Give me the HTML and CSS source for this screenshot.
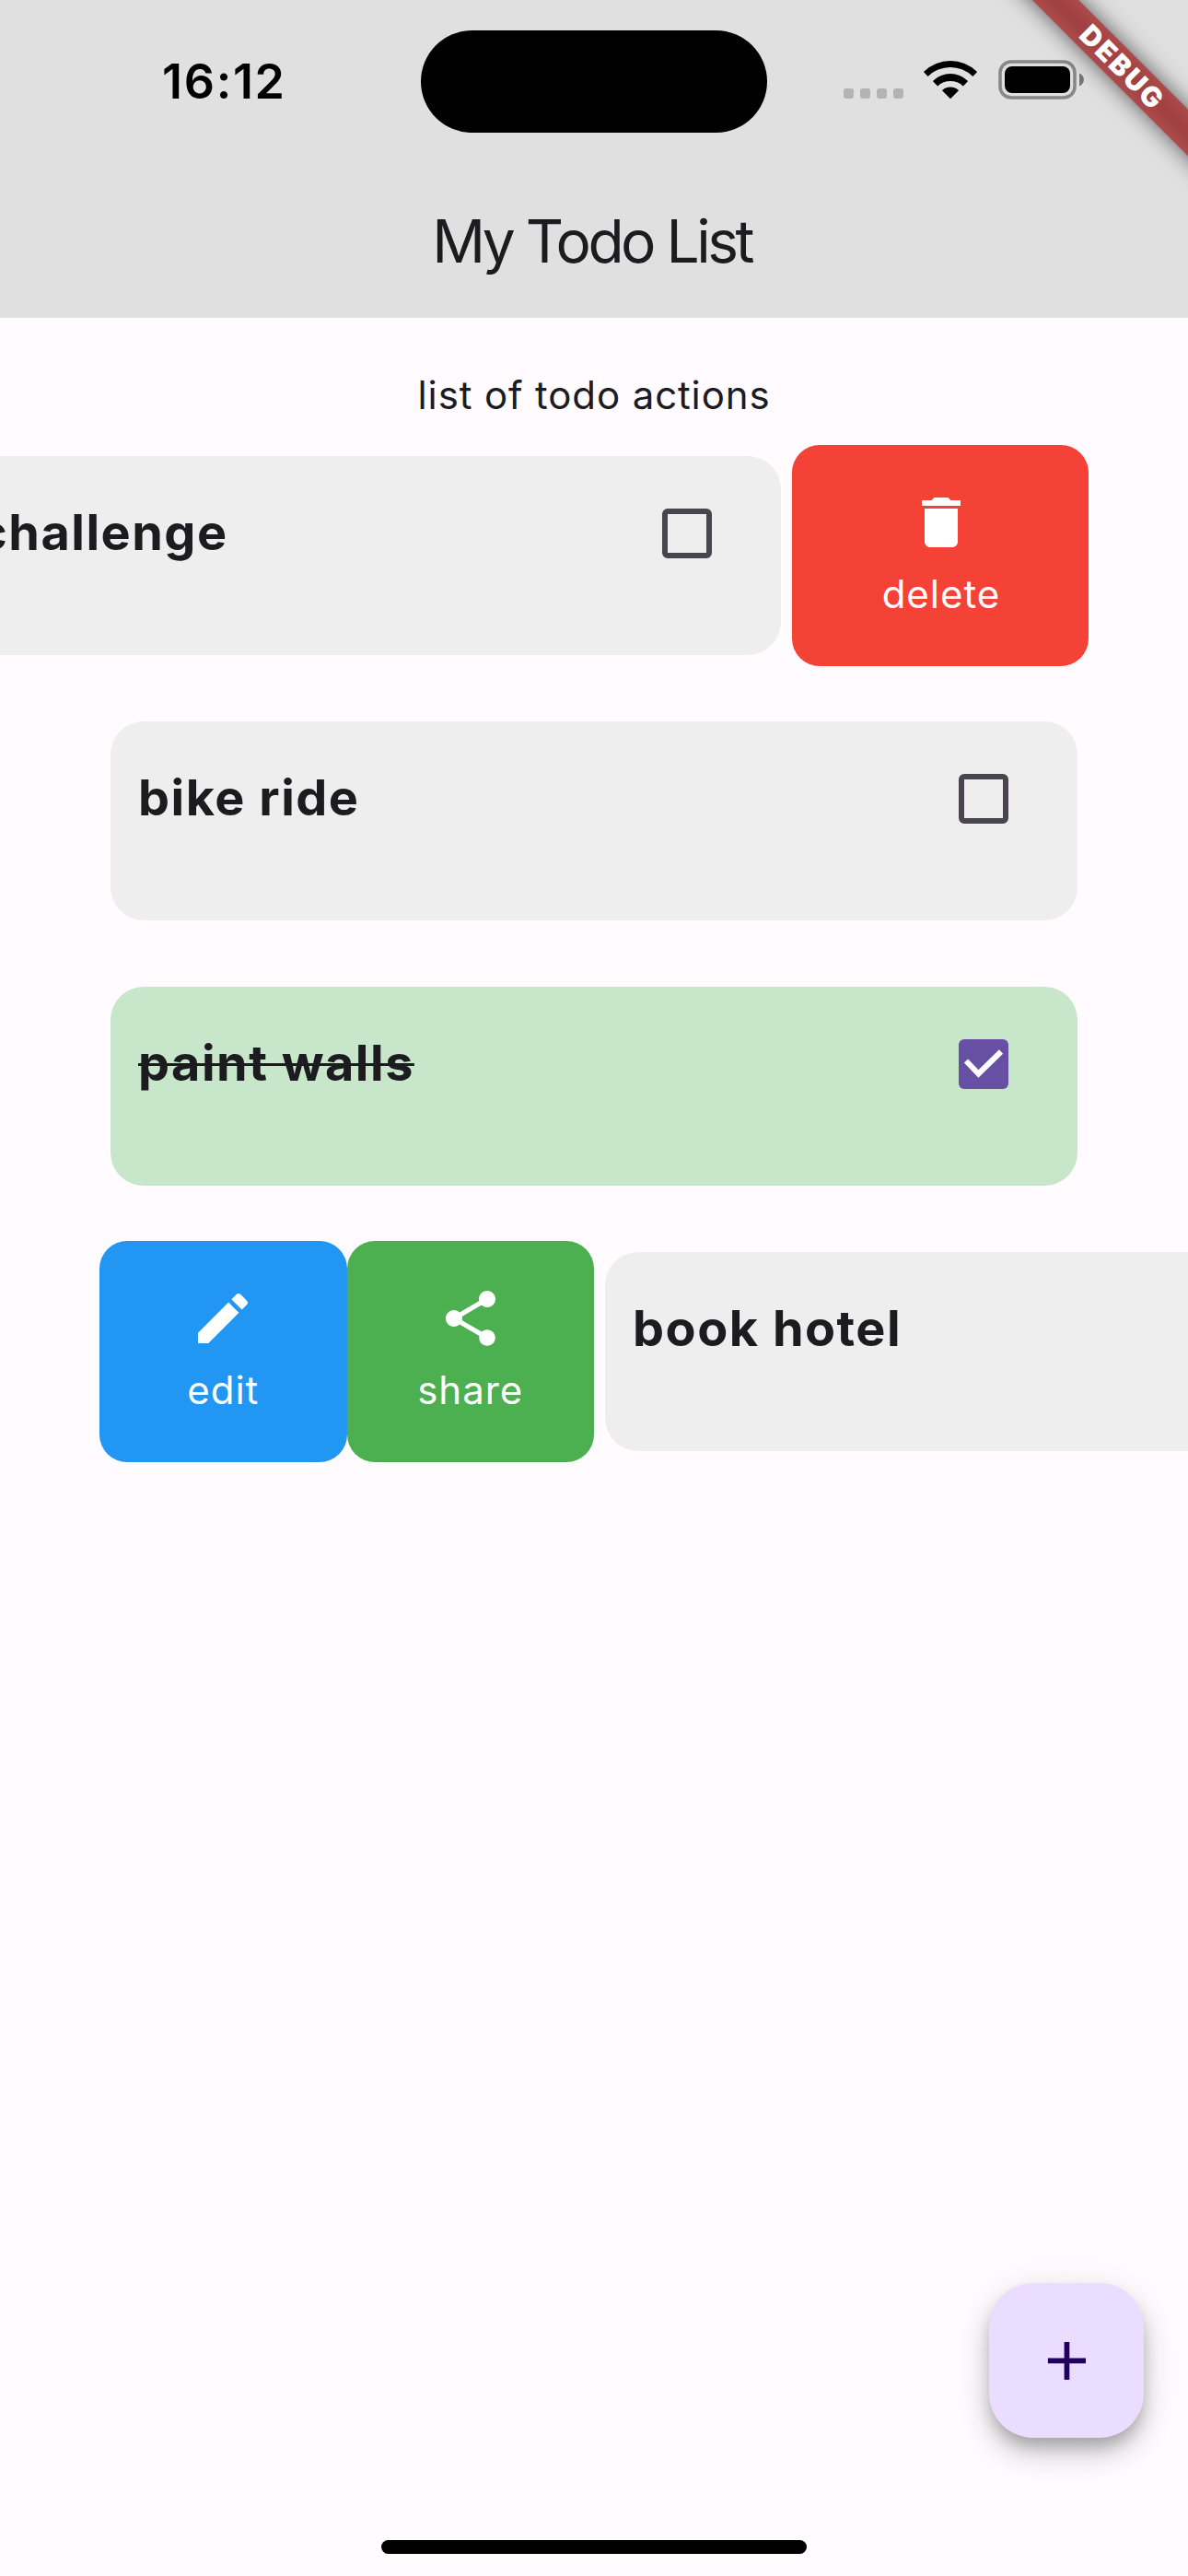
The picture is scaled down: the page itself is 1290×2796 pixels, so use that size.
FILE: index.html
```html
<!DOCTYPE html>
<html lang="en">
<head>
<meta charset="utf-8">
<title>My Todo List</title>
<link rel="stylesheet" href="styles.css">
</head>
<body>
<div class="screen">
  <header class="appbar">
    <div class="status">
      <div class="status-left"><span class="time">16:12</span></div>
      <div class="island"></div>
      <div class="status-right">
        <div class="signal"><i></i><i></i><i></i><i></i></div>
        <svg class="wifi" viewBox="0 0 58 42" width="58" height="42">
          <path d="M0.5 12.5a41 41 0 0 1 57 0 0.8 0.8 0 0 1 0 1.2l-4.2 4.2a34.500 34.500 0 0 0-48.600 0l-4.200-4.200a0.800 0.800 0 0 1 0-1.200z"/>
          <path d="M10.500 22.500a26.600 26.600 0 0 1 37 0 0.800 0.800 0 0 1 0 1.200l-4.700 4.700a20 20 0 0 0-27.600 0l-4.700-4.700a0.800 0.800 0 0 1 0-1.200z"/>
          <path d="M20.500 32.600a13 13 0 0 1 17 0 0.800 0.800 0 0 1 0 1.200l-8 7.900a0.700 0.700 0 0 1-1 0l-8-7.900a0.800 0.800 0 0 1 0-1.200z"/>
        </svg>
        <svg class="battery" viewBox="0 0 93 43" width="93" height="43">
          <rect x="2" y="2" width="81" height="39" rx="12" fill="none" stroke="#888" stroke-width="3.600"/>
          <rect x="7" y="7" width="71" height="29" rx="8"/>
          <path d="M88 14.500c6.500 2.500 6.500 11.500 0 14z" fill="#777"/>
        </svg>
      </div>
    </div>
    <h1 class="title">My Todo List</h1>
  </header>
  <div class="banner">DEBUG</div>

  <main class="content">
    <p class="subtitle">list of todo actions</p>

    <section class="row open-end">
      <article class="card">
        <span class="task">challenge</span>
        <span class="check"></span>
      </article>
      <button class="action delete">
        <svg viewBox="0 0 24 24" width="72" height="72"><path d="M6 19c0 1.100.9 2 2 2h8c1.100 0 2-.9 2-2V7H6v12zM19 4h-3.500l-1-1h-5l-1 1H5v2h14V4z"/></svg>
        <span>delete</span>
      </button>
    </section>

    <section class="row">
      <article class="card">
        <span class="task">bike ride</span>
        <span class="check"></span>
      </article>
    </section>

    <section class="row">
      <article class="card done">
        <span class="task">paint walls</span>
        <span class="check on">
          <svg viewBox="0 0 54 54" width="54" height="54"><path d="M8 23.500 21.500 37.500 46 13.500" fill="none" stroke="#fff" stroke-width="6"/></svg>
        </span>
      </article>
    </section>

    <section class="row open-start">
      <button class="action edit">
        <svg viewBox="0 0 24 24" width="72" height="72"><path d="M3 17.250V21h3.750L17.810 9.940l-3.750-3.750L3 17.250zM20.710 7.040c.39-.39.39-1.020 0-1.410l-2.340-2.340c-.39-.39-1.020-.39-1.410 0l-1.830 1.830 3.750 3.750 1.830-1.830z"/></svg>
        <span>edit</span>
      </button>
      <button class="action share">
        <svg viewBox="0 0 24 24" width="72" height="72"><path d="M18 16.080c-.76 0-1.440.3-1.960.77L8.910 12.700c.05-.23.09-.46.09-.7s-.04-.47-.09-.7l7.050-4.110c.54.5 1.250.81 2.040.81 1.660 0 3-1.340 3-3s-1.340-3-3-3-3 1.340-3 3c0 .24.04.47.09.7L8.040 9.810C7.500 9.310 6.790 9 6 9c-1.660 0-3 1.340-3 3s1.340 3 3 3c.79 0 1.500-.31 2.040-.81l7.120 4.160c-.05.21-.08.43-.08.650 0 1.610 1.310 2.920 2.920 2.920s2.920-1.310 2.920-2.920-1.310-2.920-2.920-2.920z"/></svg>
        <span>share</span>
      </button>
      <article class="card">
        <span class="task">book hotel</span>
        <span class="check"></span>
      </article>
    </section>
  </main>

  <button class="fab">
    <svg viewBox="0 0 24 24" width="72" height="72"><path d="M19 13.100h-5.900V19h-1.900v-5.900H5.300v-1.900h5.900V5.300h1.900v5.900H19z"/></svg>
  </button>
  <div class="home-bar"></div>
</div>
</body>
</html>
```
FILE: styles.css
```css
* { box-sizing: border-box; }

body {
  margin: 0;
  font-family: Inter, "Liberation Sans", sans-serif;
  color: #1c1b1f;
}

.screen {
  position: relative;
  width: 1290px;
  height: 2796px;
  overflow: hidden;
  background: #fffbff;
}

/* App bar with the system status row */
.appbar {
  height: 345px;
  background: #e0e0e0;
}

.status {
  display: grid;
  grid-template-columns: 457px 376px 457px;
  height: 177px;
  padding-top: 33px;
}

.status-left {
  padding: 25px 0 0 176px;
}

.time {
  display: block;
  font-size: 52px;
  line-height: 62px;
  font-weight: 600;
  letter-spacing: 1.700px;
  color: #000;
}

.island {
  height: 111px;
  border-radius: 56px;
  background: #000;
}

.status-right {
  display: flex;
  align-items: flex-start;
  padding: 32px 0 0 83px;
}

.signal {
  display: flex;
  gap: 7px;
  padding-top: 31px;
  margin-right: 22px;
}

.signal i {
  width: 11px;
  height: 11px;
  border-radius: 3px;
  background: #b3b3b3;
}

.wifi { margin-right: 23px; }

.title {
  margin: 0;
  font-size: 64px;
  line-height: 84px;
  padding: 43px 5px 0 0;
  font-weight: 400;
  letter-spacing: -3.500px;
  text-align: center;
}

/* Corner ribbon */
.banner {
  position: absolute;
  left: 1063px;
  top: 54px;
  width: 310px;
  height: 36px;
  padding-left: 3px;
  background: linear-gradient(#ab4b4b, #a14141 40%, #a14141 60%, #ab4b4b);
  box-shadow: 0 0 24px rgba(0, 0, 0, 0.6);
  color: #fff;
  font-size: 30px;
  line-height: 36px;
  font-weight: 900;
  letter-spacing: 2.300px;
  text-align: center;
  transform: rotate(45deg);
}

.subtitle {
  margin: 0;
  padding: 52px 0 23px;
  font-size: 42px;
  line-height: 63px;
  letter-spacing: 0.870px;
  text-align: center;
}

/* Sliding rows */
.row {
  display: flex;
  align-items: center;
  height: 240px;
  margin: 0 108px 48px;
  padding: 0 12px;
}

.open-end {
  justify-content: flex-end;
  gap: 12px;
  padding: 0;
}

.open-start { padding: 0; }

.open-start .card { margin-left: 12px; }

.card {
  display: flex;
  flex: 0 0 1050px;
  justify-content: space-between;
  align-items: flex-start;
  height: 216px;
  padding: 47px 75px 0 30px;
  border-radius: 36px;
  background: #eeeeee;
}

.open-end .card { padding-left: 178px; }

.done { background: #c8e6c9; }

.task {
  font-size: 54px;
  line-height: 72px;
  font-weight: 700;
  letter-spacing: 1.500px;
}

.done .task {
  text-decoration: line-through;
  text-decoration-thickness: 3px;
}

.check {
  width: 54px;
  height: 54px;
  margin-top: 10px;
  border: 6px solid #49454f;
  border-radius: 6px;
}

.check.on {
  border: 0;
  background: #6750a4;
}

.check svg { display: block; }

.action {
  display: flex;
  flex-direction: column;
  justify-content: center;
  align-items: center;
  gap: 12px;
  flex: none;
  width: 268.500px;
  height: 240px;
  padding: 0;
  border: 0;
  border-radius: 30px;
  color: #fff;
  font: 400 42px/60px Inter, "Liberation Sans", sans-serif;
  letter-spacing: 1px;
}

.action svg, .fab svg { fill: currentColor; }

.delete {
  width: 322px;
  padding-left: 2px;
  background: #f44336;
}
.edit { background: #2196f3; }
.share { background: #4caf50; }

.fab {
  position: absolute;
  right: 48px;
  bottom: 150px;
  display: grid;
  place-items: center;
  width: 168px;
  height: 168px;
  padding: 0;
  border: 0;
  border-radius: 48px;
  background: #eaddff;
  color: #21005d;
  box-shadow: 0 11px 17px -3px rgba(0, 0, 0, 0.22), 0 18px 32px rgba(0, 0, 0, 0.17), 0 3px 54px rgba(0, 0, 0, 0.06);
}

.home-bar {
  position: absolute;
  left: 414px;
  bottom: 24px;
  width: 462px;
  height: 15px;
  border-radius: 8px;
  background: #000;
}
```
